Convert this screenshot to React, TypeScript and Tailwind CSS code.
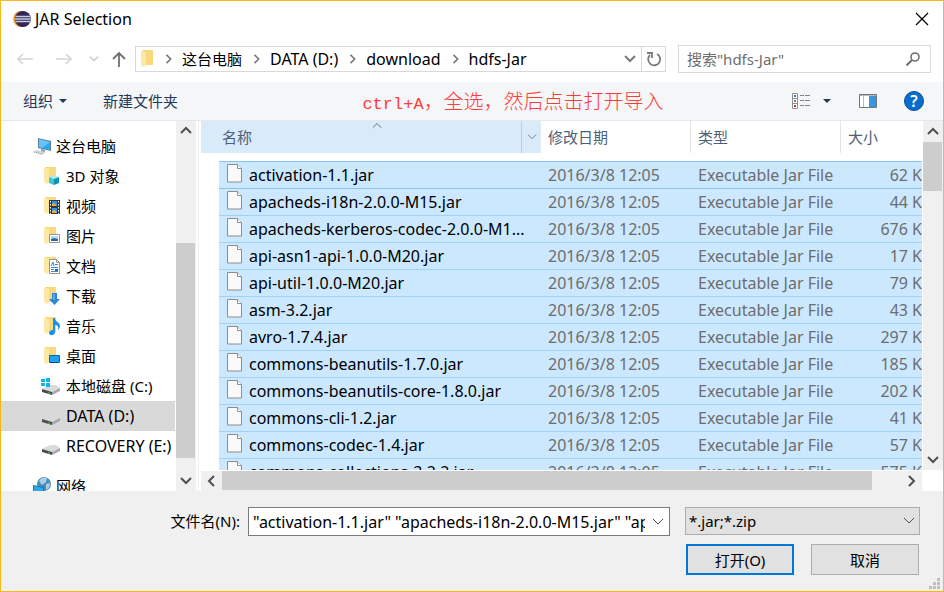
import type { ReactNode } from "react";

type Direction = "up" | "down" | "left" | "right";

const chevronPoints: Record<Direction, string> = {
  up: "1,8 6,3 11,8",
  down: "1,3 6,8 11,3",
  left: "8,1 3,6 8,11",
  right: "3,1 8,6 3,11",
};

function Chevron({
  dir,
  size = 12,
  width = 2,
  className = "text-[#505050]",
}: {
  dir: Direction;
  size?: number;
  width?: number;
  className?: string;
}) {
  return (
    <svg width={size} height={size} viewBox="0 0 12 12" className={`shrink-0 ${className}`} aria-hidden="true">
      <polyline points={chevronPoints[dir]} fill="none" stroke="currentColor" strokeWidth={width} />
    </svg>
  );
}

function Caret() {
  return (
    <svg width="8" height="4" viewBox="0 0 8 4" aria-hidden="true">
      <path d="M0 0h8L4 4z" fill="#1e395b" />
    </svg>
  );
}

function EclipseLogo() {
  return (
    <svg width="18" height="18" viewBox="0 0 18 18" className="shrink-0" aria-hidden="true">
      <circle cx="8.2" cy="9" r="8" fill="#f0952d" />
      <circle cx="9.9" cy="9" r="8" fill="#2f2757" />
      <path d="M2.4 6.4h14.8M2 9h15.7M2.4 11.6h14.8" stroke="#c9cbe2" strokeWidth="1.5" />
    </svg>
  );
}

function FolderShape() {
  return (
    <>
      <path d="M5 1h10v15H5z" fill="#f3cf6d" />
      <path d="M7 1h8v15H7z" fill="#f9d97e" />
      <path d="M3 1l5 2v13l-2 2-3-2z" fill="#fde8a6" />
    </>
  );
}

function Icon({ children }: { children: ReactNode }) {
  return (
    <svg width="20" height="20" viewBox="0 0 20 20" className="shrink-0" aria-hidden="true">
      {children}
    </svg>
  );
}

function Drive() {
  return (
    <>
      <path d="M1 13l8-4h6l4 3-8 4z" fill="#d9dadb" />
      <path d="M1 13l10 3v3L1 16z" fill="#4a4d4f" />
      <path d="M11 16l8-4v3l-8 4z" fill="#a5a8aa" />
      <path d="M7 16l2 1v1l-2-1z" fill="#35e04a" />
    </>
  );
}

const icons: Record<string, ReactNode> = {
  pc: (
    <Icon>
      <path d="M6 2l13 3v10L6 12z" fill="#5b7f9b" />
      <path d="M7 3l11 3v8L7 11z" fill="#2fa8f0" />
      <path d="M7 3l11 3-8 6-3-1z" fill="#66c4f7" />
      <path d="M9 13l4 1v3l-4-1z" fill="#8a9aa6" />
      <path d="M0 16l5-2 9 2-4 3z" fill="#d3d7da" />
      <path d="M2 16l9 2" stroke="#9ba4ab" strokeWidth="1" strokeDasharray="1 1" />
    </Icon>
  ),
  cube: (
    <Icon>
      <FolderShape />
      <path d="M8 11l5-2 5 2-5 2z" fill="#a9eef2" />
      <path d="M8 11l5 2v6l-5-2z" fill="#3fc6d6" />
      <path d="M18 11l-5 2v6l5-2z" fill="#1192ae" />
    </Icon>
  ),
  video: (
    <Icon>
      <FolderShape />
      <path d="M8 4h11v14H8z" fill="#33363b" />
      <path d="M11 5h5v5h-5z" fill="#3f8ee8" />
      <path d="M11 12h5v5h-5z" fill="#3f8ee8" />
      <path d="M11 8l2-1 3 3h-5zM11 15l3-1 2 3h-5z" fill="#e3b33b" />
      <path d="M9.5 5v13M17.5 5v13" stroke="#fff" strokeWidth="1" strokeDasharray="1.5 1.5" />
    </Icon>
  ),
  picture: (
    <Icon>
      <FolderShape />
      <path d="M8.5 8.5h10v8h-10z" fill="#fff" stroke="#8f979d" />
      <path d="M10 10h7v5h-7z" fill="#b8def8" />
      <path d="M10 13l3-1 4 1v2h-7z" fill="#2d6a9c" />
    </Icon>
  ),
  document: (
    <Icon>
      <FolderShape />
      <path d="M8.5 3.5h7l3 3v11h-10z" fill="#fff" stroke="#8f979d" />
      <path d="M15.5 3.5v3h3" fill="none" stroke="#8f979d" />
      <path d="M10 10l2-4 1 4M14 8.5h3M10 11.5h7M10 13.5h3M10 15.5h7" fill="none" stroke="#3687d6" />
      <path d="M14 13h3v2h-3z" fill="#3b5f7c" />
    </Icon>
  ),
  download: (
    <Icon>
      <FolderShape />
      <path d="M11 7h5v6h3l-5.5 6L8 13h3z" fill="#2f86d6" />
      <path d="M12 8h2v6h-2z" fill="#58a8ea" />
    </Icon>
  ),
  music: (
    <Icon>
      <FolderShape />
      <path d="M12 2h2c0 4 5 4 5 8 0 2-1 3-2 4 1-4-1-5-3-5v7c0 4-6 4-6 1 0-2 2-3 4-3z" fill="#1a8fec" />
    </Icon>
  ),
  desktop: (
    <Icon>
      <FolderShape />
      <path d="M8.5 9.5h10v7h-10z" fill="#1ba1f5" stroke="#1267a8" />
      <path d="M9 16.5h9" stroke="#0b3d68" strokeDasharray="2 1" />
    </Icon>
  ),
  system: (
    <Icon>
      <Drive />
      <path d="M0 3h4v3H0zM5 2h4v4H5zM0 7h4v3H0zM5 7h4v4H5z" fill="#10b4ea" />
    </Icon>
  ),
  drive: (
    <Icon>
      <Drive />
    </Icon>
  ),
  network: (
    <Icon>
      <circle cx="12" cy="8" r="7" fill="#4d8db5" />
      <path d="M7 5c2-4 6-4 8-3l-1 4-4 3zM14 8l4-1c0 4-2 6-4 7z" fill="#a8cfe3" />
      <path d="M1 9l11 2v8L1 16z" fill="#1c76b8" />
      <path d="M2 10l9 2v6l-9-3z" fill="#2fa8f0" />
    </Icon>
  ),
};

const places = [
  { icon: "cube", label: "3D 对象" },
  { icon: "video", label: "视频" },
  { icon: "picture", label: "图片" },
  { icon: "document", label: "文档" },
  { icon: "download", label: "下载" },
  { icon: "music", label: "音乐" },
  { icon: "desktop", label: "桌面" },
  { icon: "system", label: "本地磁盘 (C:)" },
  { icon: "drive", label: "DATA (D:)", latin: true, selected: true },
  { icon: "drive", label: "RECOVERY (E:)", latin: true },
];

const crumbs = [
  { label: "这台电脑", latin: false },
  { label: "DATA (D:)", latin: true },
  { label: "download", latin: true },
  { label: "hdfs-Jar", latin: true },
];

const files: [string, string][] = [
  ["activation-1.1.jar", "62 K"],
  ["apacheds-i18n-2.0.0-M15.jar", "44 K"],
  ["apacheds-kerberos-codec-2.0.0-M1...", "676 K"],
  ["api-asn1-api-1.0.0-M20.jar", "17 K"],
  ["api-util-1.0.0-M20.jar", "79 K"],
  ["asm-3.2.jar", "43 K"],
  ["avro-1.7.4.jar", "297 K"],
  ["commons-beanutils-1.7.0.jar", "185 K"],
  ["commons-beanutils-core-1.8.0.jar", "202 K"],
  ["commons-cli-1.2.jar", "41 K"],
  ["commons-codec-1.4.jar", "57 K"],
  ["commons-collections-3.2.2.jar", "575 K"],
];

function TitleBar() {
  return (
    <header className="flex h-9 shrink-0 items-center pl-3 pr-[14px]">
      <EclipseLogo />
      <h1 className="ml-1 flex-1 text-[16px]">JAR Selection</h1>
      <button aria-label="关闭">
        <svg width="14" height="14" viewBox="0 0 14 14" aria-hidden="true">
          <path d="M1 1l12 12M13 1L1 13" stroke="#000" strokeWidth="1.2" />
        </svg>
      </button>
    </header>
  );
}

function NavBar() {
  return (
    <nav className="flex h-11 shrink-0 items-center pr-3">
      <div className="flex w-[134px] items-center pl-4">
        <button aria-label="后退">
          <svg width="16" height="12" viewBox="0 0 16 12" aria-hidden="true">
            <path d="M1 6h15M6 1L1 6l5 5" fill="none" stroke="#d6d6d6" strokeWidth="1.6" />
          </svg>
        </button>
        <button aria-label="前进" className="ml-[23px]">
          <svg width="16" height="12" viewBox="0 0 16 12" aria-hidden="true">
            <path d="M0 6h15M10 1l5 5-5 5" fill="none" stroke="#d6d6d6" strokeWidth="1.6" />
          </svg>
        </button>
        <button aria-label="最近浏览的位置" className="ml-[17px]">
          <Chevron dir="down" size={10} className="text-[#d0d0d0]" />
        </button>
        <button aria-label="上移" className="ml-3">
          <svg width="16" height="16" viewBox="0 0 16 16" aria-hidden="true">
            <path d="M8 16V2M2 8l6-6 6 6" fill="none" stroke="#707070" strokeWidth="1.8" />
          </svg>
        </button>
      </div>
      <div className="flex h-[26px] min-w-0 flex-1 items-center border border-[#d9d9d9] text-black">
        <svg width="20" height="20" viewBox="0 0 20 20" className="ml-[2px] shrink-0" aria-hidden="true">
          <FolderShape />
        </svg>
        {crumbs.map(({ label, latin }, i) => (
          <span key={label} className={`flex items-center gap-2 ${i ? "ml-2" : "ml-1"}`}>
            <Chevron dir="right" size={10} className="ml-[2px] text-[#7a7a7a]" />
            <button className={`whitespace-nowrap ${latin ? "text-[16px]" : "text-[15px]"}`}>{label}</button>
          </span>
        ))}
        <button aria-label="以前的位置" className="ml-auto mr-[5px]">
          <Chevron dir="down" className="text-[#7a7a7a]" />
        </button>
        <button aria-label="刷新" className="flex h-full w-6 items-center justify-center border-l border-[#d9d9d9]">
          <svg width="16" height="16" viewBox="0 0 16 16" aria-hidden="true">
            <path d="M11 3a6 6 0 1 1-7 1" fill="none" stroke="#7a7a7a" strokeWidth="1.8" />
            <path d="M1 2h5v5" fill="none" stroke="#7a7a7a" strokeWidth="1.8" />
          </svg>
        </button>
      </div>
      <div className="ml-3 flex h-7 w-[253px] items-center border border-[#d9d9d9] pl-2 pr-[10px]">
        <input
          aria-label="搜索"
          placeholder={'搜索"hdfs-Jar"'}
          className="min-w-0 flex-1 text-[15px] outline-none placeholder:text-[#6d6d6d]"
        />
        <svg width="14" height="14" viewBox="0 0 14 14" aria-hidden="true">
          <circle cx="9" cy="5" r="4" fill="none" stroke="#707070" strokeWidth="1.6" />
          <path d="M6 8l-5.5 5.5" stroke="#707070" strokeWidth="2" />
        </svg>
      </div>
    </nav>
  );
}

function Toolbar() {
  return (
    <div className="mt-px flex h-[39px] shrink-0 items-center border-b border-[#e5e7ea] bg-[#f5f6f7] pl-[22px] pr-[19px] text-[15px] text-[#1e395b]">
      <button className="flex items-center gap-[6px]">
        组织
        <Caret />
      </button>
      <button className="ml-[36px]">新建文件夹</button>
      <p className="flex flex-1 items-baseline justify-center whitespace-nowrap pl-14 pt-1 text-[#ff3b3b]">
        <span className="font-['Liberation_Mono',monospace] text-[17px] leading-6">ctrl+A</span>
        <span className="font-['Noto_Sans_CJK_SC',sans-serif] text-[20px] font-light leading-6">
          ，全选，然后点击打开导入
        </span>
      </p>
      <button aria-label="更改视图">
        <svg width="19" height="17" viewBox="0 0 19 17" aria-hidden="true">
          <path d="M.5 .5h5v15h-5zM.5 5.5h5M.5 10.5h5" fill="#fff" stroke="#8e9296" />
          <path d="M2 2h2v2H2z" fill="#2f78c4" />
          <path d="M2 7h2v2H2z" fill="#7b8a52" />
          <path d="M2 12h2v2H2z" fill="#b0362e" />
          <path d="M8 2.5h4M13 2.5h5M8 7.500h4M13 7.5h5M8 12.5h4M13 12.5h5" stroke="#80868b" />
        </svg>
      </button>
      <button aria-label="更多选项" className="ml-3">
        <Caret />
      </button>
      <button aria-label="预览窗格" className="ml-7">
        <svg width="19" height="15" viewBox="0 0 19 15" aria-hidden="true">
          <path d="M.5 .5h17v13H.5z" fill="#fff" stroke="#6f757a" />
          <path d="M1 1h16v1H1z" fill="#b9bdc1" />
          <path d="M4.5 2v11" stroke="#b9bdc1" />
          <path d="M10 2h7v11h-7z" fill="#3a96dd" />
        </svg>
      </button>
      <button
        aria-label="帮助"
        className="ml-[26px] flex size-5 items-center justify-center rounded-full border border-[#0a4f96] bg-[#0a6ccc] text-[16px] font-semibold leading-5 text-white"
      >
        ?
      </button>
    </div>
  );
}

function Sidebar() {
  return (
    <aside className="flex w-[198px] shrink-0 border-r border-[#eeeeee]">
      <div className="min-w-0 flex-1 overflow-hidden pt-[10px]">
        <button className="flex h-[30px] w-full items-center gap-[4px] pl-[31px]">
          {icons.pc}
          这台电脑
        </button>
        {places.map((p) => (
          <button
            key={p.label}
            className={`flex h-[30px] w-[174px] items-center gap-[5px] whitespace-nowrap pl-10 ${p.selected ? "bg-[#d9d9d9]" : ""} ${p.latin ? "text-[16px]" : "text-[15px]"}`}
          >
            {icons[p.icon]}
            {p.label}
          </button>
        ))}
        <button className="mt-[10px] flex h-[30px] w-full items-center gap-[4px] pl-[31px]">
          {icons.network}
          网络
        </button>
      </div>
      <div className="mr-[2px] flex w-5 flex-col bg-[#f0f0f0]">
        <button aria-label="向上滚动" className="flex h-5 items-center justify-center">
          <Chevron dir="up" />
        </button>
        <div className="grow-[102]" />
        <div className="mr-px grow-[215] bg-[#cdcdcd]" />
        <div className="grow-[13]" />
        <button aria-label="向下滚动" className="flex h-5 items-center justify-center">
          <Chevron dir="down" />
        </button>
      </div>
    </aside>
  );
}

function FileIcon() {
  return (
    <svg width="15" height="19" viewBox="0 0 15 19" className="mb-1 shrink-0" aria-hidden="true">
      <path d="M.5 .5h10l4 4v13.5H.5z" fill="#fafafa" stroke="#8d8d8d" />
      <path d="M10.5 .5v4h4" fill="#fff" stroke="#8d8d8d" />
    </svg>
  );
}

function FileList() {
  return (
    <section className="ml-[2px] flex min-w-0 flex-1 flex-col">
      <div className="flex min-h-0 flex-1">
        <div className="min-w-0 flex-1 overflow-hidden">
          <table className="w-full table-fixed border-separate border-spacing-0">
            <colgroup>
              <col className="w-[18px]" />
              <col />
              <col className="w-[150px]" />
              <col className="w-[150px]" />
              <col className="w-[81px]" />
            </colgroup>
            <thead>
              <tr className="h-8 text-left text-[#4c607a]">
                <th colSpan={2} className="relative bg-[#d9eaf8] p-0 font-normal">
                  <span className="flex h-8 items-center justify-between">
                    <span className="pl-[21px]">名称</span>
                    <span className="flex h-8 w-5 items-center justify-center border-l border-[#b9cfe2]">
                      <Chevron dir="down" size={10} width={1} className="text-[#5f6f80]" />
                    </span>
                  </span>
                  <span className="absolute inset-x-0 top-0 flex justify-center pl-3">
                    <Chevron dir="up" size={10} width={1} className="text-[#4a5866]" />
                  </span>
                </th>
                <th className="border-r border-[#e5e5e5] p-0 pl-[7px] font-normal">修改日期</th>
                <th className="border-r border-[#e5e5e5] p-0 pl-[7px] font-normal">类型</th>
                <th className="p-0 pl-[7px] font-normal">大小</th>
              </tr>
              <tr className="h-2">
                <td colSpan={5} className="p-0" />
              </tr>
            </thead>
            <tbody className="text-[16px] text-[#6d6d6d] [&_td+td]:border-b [&_td+td]:border-[#a0d2fa] [&_td+td]:bg-[#cce8ff] [&_tr:first-child_td+td]:border-t [&_tr:first-child_td+td]:border-[#85c4f5]">
              {files.map(([name, size]) => (
                <tr key={name} className="h-[27px] first:h-7">
                  <td className="p-0" />
                  <td className="p-0">
                    <span className="flex h-[26px] items-center gap-[7px] whitespace-nowrap pl-2 text-black">
                      <FileIcon />
                      {name}
                    </span>
                  </td>
                  <td className="whitespace-nowrap p-0 pl-[7px]">2016/3/8 12:05</td>
                  <td className="whitespace-nowrap p-0 pl-[7px]">Executable Jar File</td>
                  <td className="whitespace-nowrap p-0 text-right">{size}</td>
                </tr>
              ))}
            </tbody>
          </table>
        </div>
        <div className="ml-px flex w-5 flex-col bg-[#f0f0f0]">
          <button aria-label="向上滚动" className="flex h-[21px] items-center justify-center">
            <Chevron dir="up" />
          </button>
          <div className="mr-px grow-[49] bg-[#cdcdcd]" />
          <div className="grow-[259]" />
          <button aria-label="向下滚动" className="flex h-5 items-center justify-center">
            <Chevron dir="down" />
          </button>
        </div>
      </div>
      <div className="mr-[21px] mt-px flex h-5 shrink-0 bg-[#f0f0f0]">
        <button aria-label="向左滚动" className="flex w-[21px] items-center justify-center">
          <Chevron dir="left" />
        </button>
        <div className="mb-px grow-[650] bg-[#cdcdcd]" />
        <div className="grow-[29]" />
        <button aria-label="向右滚动" className="flex w-[21px] items-center justify-center">
          <Chevron dir="right" />
        </button>
      </div>
    </section>
  );
}

function Footer() {
  return (
    <footer className="relative h-[100px] shrink-0 bg-[#f0f0f0] pr-[23px] pt-4 text-[15px] text-black">
      <div className="flex items-start">
        <label htmlFor="filename" className="w-[247px] pr-2 text-right leading-7">
          文件名(N):
        </label>
        <div className="flex h-[29px] min-w-0 flex-1 items-center border border-[#7a7a7a] bg-white pl-1 pr-[5px]">
          <input
            id="filename"
            defaultValue={'"activation-1.1.jar" "apacheds-i18n-2.0.0-M15.jar" "apacheds-kerberos-codec-2.0.0-M15.jar"'}
            className="min-w-0 flex-1 text-[16px] outline-none"
          />
          <button aria-label="显示文件名列表" className="ml-[7px]">
            <Chevron dir="down" width={1} />
          </button>
        </div>
        <div className="relative ml-[15px] w-[235px]">
          <select
            aria-label="文件类型"
            className="block h-7 w-full appearance-none border border-[#adadad] bg-[#e1e1e1] pl-[3px] outline-none"
          >
            <option>*.jar;*.zip</option>
          </select>
          <span className="pointer-events-none absolute inset-y-0 right-[5px] flex items-center">
            <Chevron dir="down" width={1} />
          </span>
        </div>
      </div>
      <div className="mt-2 flex justify-end gap-[17px] pr-px">
        <button className="h-[31px] w-[108px] border-2 border-[#0078d7] bg-[#e1e1e1]">打开(O)</button>
        <button className="h-[31px] w-[108px] border border-[#adadad] bg-[#e1e1e1]">取消</button>
      </div>
      <svg width="11" height="11" viewBox="0 0 11 11" className="absolute bottom-[2px] right-[3px]" aria-hidden="true">
        <path d="M8 0h3v3H8zM8 4h3v3H8zM8 8h3v3H8zM4 4h3v3H4zM4 8h3v3H4zM0 8h3v3H0z" fill="#bfbfbf" />
      </svg>
    </footer>
  );
}

export default function App() {
  return (
    <div className="flex h-screen flex-col overflow-hidden border border-[#fbb917] bg-white font-['Noto_Sans','Noto_Sans_CJK_SC',sans-serif] text-[15px] leading-5 text-black">
      <TitleBar />
      <NavBar />
      <Toolbar />
      <main className="flex min-h-0 flex-1">
        <Sidebar />
        <FileList />
      </main>
      <Footer />
    </div>
  );
}
